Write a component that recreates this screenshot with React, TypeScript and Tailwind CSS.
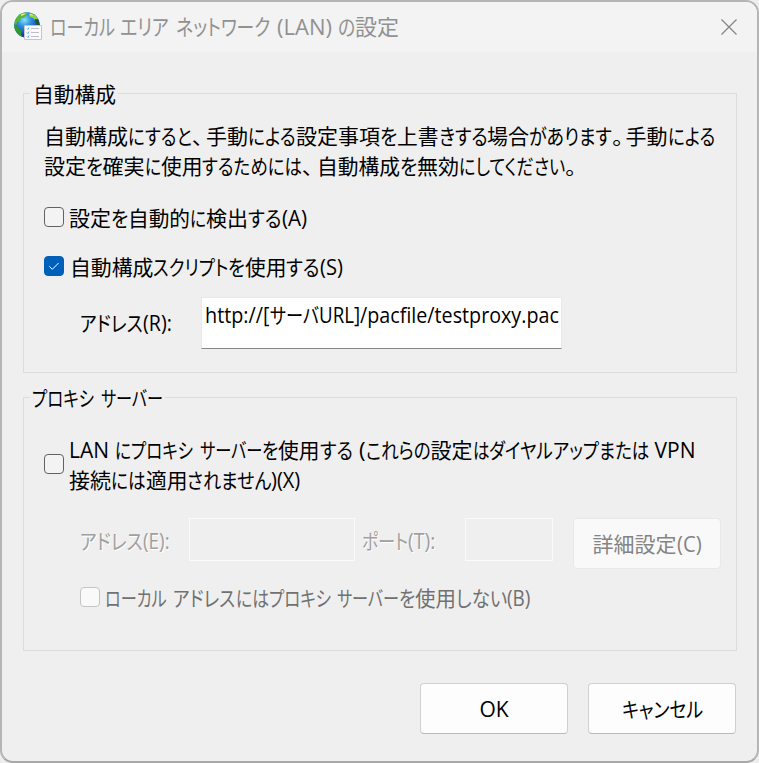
import React, { useLayoutEffect, useRef, useState } from "react";

// [text, advance in px], a blank text is only a gap
type Run = [string, number];

const Fit = ({ run }: { run: Run }) => {
  const [text, width] = run;
  const ref = useRef<HTMLSpanElement>(null);
  const [scale, setScale] = useState(1);

  useLayoutEffect(() => {
    const natural = ref.current ? ref.current.offsetWidth : 0;
    if (natural > 0) {
      setScale(Math.min(width / natural, 1.06));
    }
  }, [text, width]);

  return (
    <span className="block shrink-0" style={{ width }}>
      <span
        ref={ref}
        className="inline-block origin-left whitespace-pre"
        style={{ transform: `scaleX(${scale})` }}
      >
        {text}
      </span>
    </span>
  );
};

const Line = ({ runs, className = "" }: { runs: Run[]; className?: string }) => (
  <div className={`flex ${className}`}>
    {runs.map((run, i) => (
      <Fit key={i} run={run} />
    ))}
  </div>
);

const title: Run[] = [
  ["ローカル", 65],
  [" ", 5],
  ["エリア", 49],
  [" ", 7],
  ["ネットワーク", 94],
  [" ", 7],
  ["(LAN)", 55],
  [" ", 6],
  ["の", 17],
  ["設定", 44],
];

const intro1: Run[] = [
  ["自動構成", 84],
  ["にすると", 64],
  ["、", 14],
  ["手動", 42],
  ["による", 48],
  ["設定事項", 84],
  ["を", 17],
  ["上書", 41.5],
  ["きする", 48.5],
  ["場合", 42],
  ["があります", 83],
  ["。", 13.5],
  ["手動", 42],
  ["による", 47.5],
];

const intro2: Run[] = [
  ["設定", 42],
  ["を", 16.5],
  ["確実", 42],
  ["に", 16],
  ["使用", 41.5],
  ["するためには", 100],
  ["、", 15],
  ["自動構成", 83],
  ["を", 17],
  ["無効", 42],
  ["にしてください", 106],
  ["。", 14],
];

const detect: Run[] = [
  ["設定", 42],
  ["を", 17],
  ["自動的", 62],
  ["に", 16],
  ["検出", 42],
  ["する", 33.5],
  ["(A)", 25.5],
];

const script: Run[] = [
  ["自動構成", 83.5],
  ["スクリプト", 75],
  ["を", 16.5],
  ["使用", 41.5],
  ["する", 33.5],
  ["(S)", 23],
];

const url: Run[] = [
  ["http://[", 65],
  ["サーバ", 49],
  ["URL]", 41],
  ["/pacfile/testproxy.pac", 199],
];

const proxyTitle: Run[] = [
  ["プロキシ", 62],
  [" ", 7],
  ["サーバー", 62],
];

const lan1: Run[] = [
  ["LAN", 40],
  [" ", 6],
  ["に", 16],
  ["プロキシ", 62],
  [" ", 6.5],
  ["サーバー", 62.5],
  ["を", 16],
  ["使用", 41.5],
  ["する", 33],
  [" ", 6],
  ["(", 7],
  ["これらの", 65],
  ["設定", 42],
  ["は", 16.5],
  ["ダイヤルアップ", 110],
  ["または", 50],
  [" ", 5.5],
  ["VPN", 41],
];

const lan2: Run[] = [
  ["接続", 42],
  ["には", 34.5],
  ["適用", 41.5],
  ["されません", 84],
  [")(X)", 29.5],
];

const bypass: Run[] = [
  ["ローカル", 61.5],
  [" ", 6.5],
  ["アドレス", 62.5],
  ["には", 33],
  ["プロキシ", 62],
  [" ", 6.5],
  ["サーバー", 62],
  ["を", 16],
  ["使用", 41],
  ["しない", 51],
  ["(B)", 23.5],
];

const GlobeIcon = () => (
  <svg width="29" height="29" viewBox="0 0 29 29" className="-mt-[2px] shrink-0">
    <defs>
      <radialGradient id="sea" cx="0.4" cy="0.3" r="0.75">
        <stop offset="0" stopColor="#8fe0f8" />
        <stop offset="0.35" stopColor="#2f8fe0" />
        <stop offset="0.75" stopColor="#1746a8" />
        <stop offset="1" stopColor="#0c2670" />
      </radialGradient>
      <clipPath id="globe">
        <circle cx="13" cy="13" r="12.8" />
      </clipPath>
    </defs>
    <circle cx="13" cy="13" r="12.8" fill="url(#sea)" />
    <g clipPath="url(#globe)">
      <path d="M2 6 6 2l4-2 5 1-3 2-2 3-3 0-1 3-3 1-1 4-2-1z" fill="#55b83a" />
      <path d="M0 12l3 1 2 4 3 2-1 3 2 4-5-2-4-6z" fill="#2c9a2c" />
      <path d="M16 1l5 2 3 4-3 1-2-2-3-1-1-2z" fill="#8ed43f" />
      <path d="M21 7l3 1 2 5-3 0-2-3z" fill="#1e5c2a" />
      <path d="M7 2l5-1-2 2-3 1zM15 2l3 0 1 2-3-1z" fill="#d4ee8a" />
    </g>
    <path d="M10.500 13.500h17v14h-17z" fill="#fafafa" stroke="#c3c5c8" />
    <path
      d="M13 16.500l1 1 1-2M13 20.500l1 1 1-2M13 24.500l1 1 1-2"
      fill="none"
      stroke="#53a4dc"
      strokeWidth="0.9"
    />
    <path d="M17 16.500h8M17 20.500h8M17 24.500h8" stroke="#bcbdcc" />
  </svg>
);

const CheckBox = ({
  checked = false,
  disabled = false,
  className = "",
}: {
  checked?: boolean;
  disabled?: boolean;
  className?: string;
}) => {
  const look = checked
    ? "border-[#005fb8] bg-[#005fb8]"
    : disabled
      ? "border-[#c4c4c4] bg-[#f9f9f9]"
      : "border-[#626262] bg-[#f3f3f3]";
  return (
    <span
      role="checkbox"
      aria-checked={checked}
      aria-disabled={disabled}
      className={`block size-5 shrink-0 rounded-[4px] border ${look} ${className}`}
    >
      {checked && (
        <svg width="18" height="18" viewBox="0 0 18 18">
          <path d="M4.300 9.300l3 3 6.300-6.300" fill="none" stroke="#fff" strokeWidth="1" />
        </svg>
      )}
    </span>
  );
};

const App = () => {
  return (
    <div className="h-[763px] w-[759px] bg-[#eeeeee]">
      <div className="flex h-full flex-col overflow-hidden rounded-[13px] border-2 border-[#b5b5b5] border-b-[#a8a8a8] bg-[#efefef] font-['Open_Sans','Noto_Sans_CJK_JP',sans-serif] text-[21px] leading-[30px] text-black [font-feature-settings:'palt']">
        <header className="flex h-[50px] shrink-0 items-center bg-[#f3f3f3] pl-3 pr-5 text-[22px] text-[#919191]">
          <GlobeIcon />
          <Line runs={title} className="-mt-[2px] ml-[7px]" />
          <svg width="16" height="16" viewBox="0 0 16 16" className="-mt-px ml-auto">
            <path d="M.5.5l15 15M15.500.5l-15 15" stroke="#858585" strokeWidth="1.300" />
          </svg>
        </header>

        <main className="flex flex-col px-[21px]">
          <section className="mt-[41px] h-[280px] w-[714px] border border-[#dcdcdc]">
            <div className="-mt-3 ml-[6px] flex h-[26px] w-[88px] items-center bg-[#efefef] pb-[2px] pl-[3px]">
              <Line runs={[["自動構成", 83]]} />
            </div>
            <div className="ml-5 mt-[13px]">
              <Line runs={intro1} />
              <Line runs={intro2} />
            </div>
            <label className="ml-5 mt-[26px] flex h-5 items-center">
              <CheckBox />
              <Line runs={detect} className="ml-[5px] mt-[2px]" />
            </label>
            <label className="ml-5 mt-[29px] flex h-5 items-center">
              <CheckBox checked />
              <Line runs={script} className="ml-[5.5px] mt-[2px]" />
            </label>
            <div className="ml-14 mt-[21px] flex h-[52px] items-center">
              <Line
                runs={[
                  ["アドレス", 63],
                  ["(R):", 29],
                ]}
                className="w-[121px]"
              />
              <div className="h-[52px] w-[361px] border border-[#e8e8e8] border-b-[#868686] bg-white pl-[3px] pt-[2px]">
                <Line runs={url} />
              </div>
            </div>
          </section>

          <section className="mt-6 h-[254px] w-[714px] border border-[#dcdcdc]">
            <div className="-mt-3 ml-[6px] flex h-[26px] w-[135px] items-center bg-[#efefef] pb-[2px] pl-[2px]">
              <Line runs={proxyTitle} />
            </div>
            <label className="ml-5 mt-[23px] flex items-start">
              <CheckBox className="mt-[19px]" />
              <div className="ml-[5px]">
                <Line runs={lan1} />
                <Line runs={lan2} />
              </div>
            </label>
            <div className="ml-14 mt-[23px] flex h-[51px] items-start text-[#a0a0a0]">
              <Line
                runs={[
                  ["アドレス", 63],
                  ["(E):", 27],
                ]}
                className="mt-[8px] w-[109px] [text-shadow:1px_1px_0_#fff]"
              />
              <div className="h-[43px] w-[166px] border border-[#fafafa]" />
              <Line
                runs={[
                  ["ポート", 46],
                  ["(T):", 27],
                ]}
                className="ml-[7px] mt-[8px] w-[103px] [text-shadow:1px_1px_0_#fff]"
              />
              <div className="h-[43px] w-[88px] border border-[#fafafa]" />
              <div className="ml-5 flex h-[51px] w-[148px] items-center justify-center rounded-[4px] border border-[#e8e8e8] bg-[#f9f9f9] text-[#848484]">
                <Line
                  runs={[
                    ["詳細設定", 84],
                    ["(C)", 25],
                  ]}
                />
              </div>
            </div>
            <label className="ml-14 mt-[18px] flex h-5 items-center text-[#717171]">
              <CheckBox disabled />
              <Line runs={bypass} className="ml-[5px] mt-[2px]" />
            </label>
          </section>

          <footer className="mt-8 flex gap-5 pl-[397px]">
            <button className="flex h-[51px] w-[148px] items-center justify-center rounded-[4px] border border-[#d0d0d0] border-b-[#bababa] bg-[#fdfdfd]">
              <Line runs={[["OK", 29]]} />
            </button>
            <button className="flex h-[51px] w-[148px] items-center justify-center rounded-[4px] border border-[#d0d0d0] border-b-[#bababa] bg-[#fdfdfd]">
              <Line runs={[["キャンセル", 81]]} />
            </button>
          </footer>
        </main>
      </div>
    </div>
  );
};

export default App;
